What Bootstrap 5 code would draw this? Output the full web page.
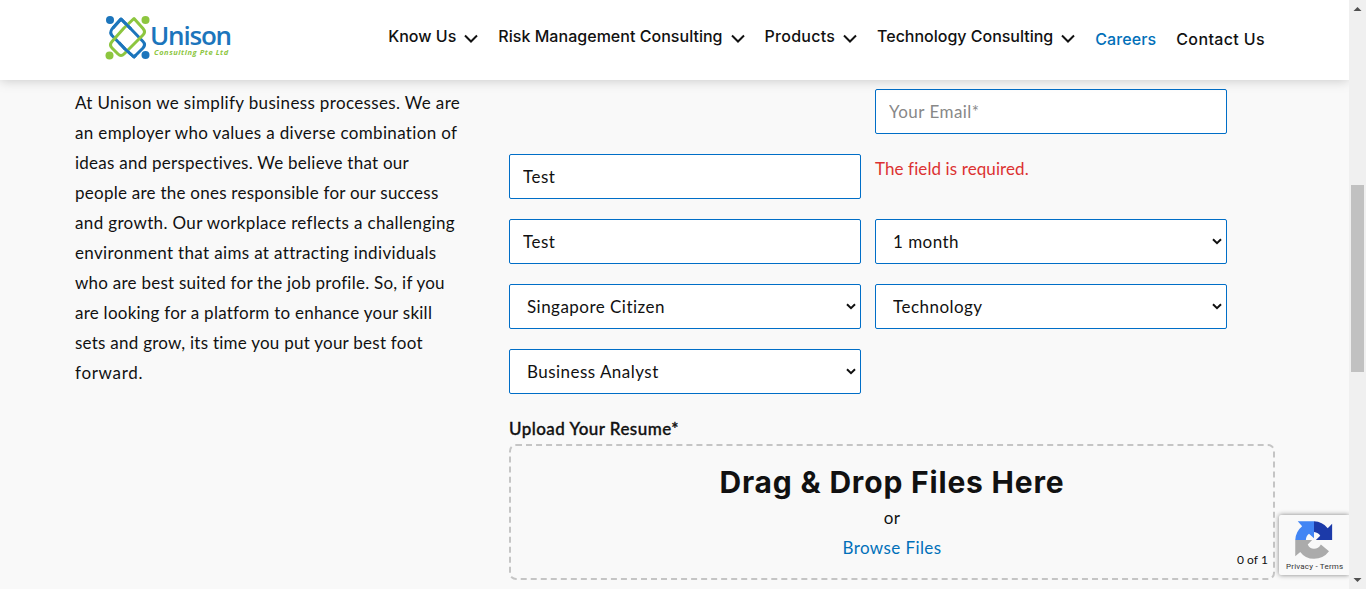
<!DOCTYPE html>
<html lang="en">
<head>
<meta charset="utf-8">
<meta name="viewport" content="width=device-width, initial-scale=1">
<title>Careers - Unison Consulting</title>
<link href="https://cdn.jsdelivr.net/npm/bootstrap@5.3.0/dist/css/bootstrap.min.css" rel="stylesheet">
<style>
html, body { height: 100%; overflow: hidden; }
body { background: #f9f9f9; color: #111; font-family: Lato, sans-serif; font-size: 17px; line-height: 30px; letter-spacing: .4px; }
.page-view { width: 1349px; height: 589px; overflow: hidden; }
.site-header { height: 80px; background: #fff; box-shadow: 0 0 12px rgba(0,0,0,.22); z-index: 5; padding-left: 105px; padding-right: 84px; }
.brand-logo { margin-top: 15px; width: 127px; height: 46px; text-decoration: none; letter-spacing: 0; }
.brand-logo svg { width: 46px; height: 46px; }
.brand-name { font-family: "Open Sans", sans-serif; font-size: 26px; font-weight: 600; line-height: 26px; letter-spacing: -1.2px; color: #1c75bc; margin: 7px 0 0 -1px; }
.brand-sub { font-family: "Open Sans", sans-serif; font-size: 7.5px; font-weight: 700; font-style: italic; line-height: 9px; letter-spacing: .55px; color: #8dc63f; padding-left: 3px; white-space: nowrap; }
.main-menu { font-family: Inter, sans-serif; font-weight: 500; font-size: 16px; line-height: 24px; letter-spacing: .03px; padding-top: 24px; gap: 20px; }
.main-menu a { color: #111; text-decoration: none; white-space: nowrap; height: 24px; }
.main-menu .plain { margin-top: 3px; }
.main-menu .current { color: #0170b9; letter-spacing: .1px; }
.main-menu .contact { letter-spacing: .37px; }
.main-menu .products { letter-spacing: .25px; }
.main-menu .tech { letter-spacing: -.01px; }
.main-menu svg { width: 14px; height: 9px; margin: 10px 0 0 8px; }
.careers-body { padding-left: 75px; padding-top: 8px; }
.intro-text { width: 434px; white-space: nowrap; letter-spacing: .35px; }
.intro-text .snug { letter-spacing: .25px; }
.intro-text .wide { letter-spacing: .7px; }
.form-area { width: 766px; }
.field-grid { display: grid; grid-template-columns: 352px 352px; column-gap: 14px; row-gap: 20px; grid-auto-rows: 45px; padding-top: 1px; }
.form-area .form-control, .form-area .form-select { height: 45px; border: 1px solid #006ec7; border-radius: 2px; background-color: #fff; color: #111; font: inherit; letter-spacing: .47px; padding: 0 13px; box-shadow: none; }
.form-area .form-control::placeholder { color: #888; }
.form-area .form-select { padding-left: 17px; background-image: url("data:image/svg+xml,%3Csvg xmlns='http://www.w3.org/2000/svg' viewBox='0 0 10 7'%3E%3Cpath d='M1 1.2 5 5.2 9 1.2' fill='none' stroke='%23111' stroke-width='2'/%3E%3C/svg%3E"); background-size: 10px 7px; background-position: right 4px center; }
.form-error { color: #dc3232; letter-spacing: .1px; }
.upload-label { font-weight: 500; margin-top: 20px; line-height: 30px; letter-spacing: .45px; -webkit-text-stroke: .35px #111; }
.drop-zone { height: 136px; border: 2px dashed #c5c5c5; border-radius: 7px; padding-top: 20px; }
.drop-title { font-family: Inter, sans-serif; font-size: 30px; font-weight: 700; line-height: 32px; margin: 0 0 5px; letter-spacing: .82px; }
.browse-link { color: #0170b9; text-decoration: none; }
.file-count { right: 5px; bottom: 10px; font-size: 12px; line-height: 16px; letter-spacing: .05px; }
.captcha-badge { left: 1279px; top: 515px; width: 70px; height: 60px; background: #f9f9f9; box-shadow: 0 0 5px #808080; border-radius: 2px 0 0 2px; z-index: 4; }
.captcha-badge svg { width: 40px; height: 40px; margin: 5px 0 0 15px; display: block; }
.captcha-links { font-family: Roboto, sans-serif; font-size: 8px; line-height: 10px; letter-spacing: .2px; padding: 2px 0 0 7px; white-space: nowrap; color: #333; }
.scroll-track { width: 17px; height: 589px; background: #f0f0f0; }
.scroll-thumb { width: 13px; height: 187px; margin: 0 2px; background: #c1c1c1; }
.scroll-track svg { width: 17px; display: block; }
</style>
</head>
<body>
<div class="d-flex">
  <div class="page-view position-relative">
    <header class="site-header d-flex justify-content-between position-relative">
      <a href="#" class="brand-logo d-flex" aria-label="Unison Consulting">
        <svg viewBox="0 0 46 46" class="flex-shrink-0">
          <g fill="none" stroke-width="3" stroke-linejoin="round" stroke-linecap="butt">
            <path d="M16 4 7 14Q4.500 17.500 7 20.500L20 34 29 42 38 33Q41 29.500 38 26.500L26 14Z" stroke="#1c75bc"/>
            <path d="M29 3.500 19 13 7 26.500Q4 30 7 33L13 39Q16 42 19 39L38 20Q41 17 38 13.500Z" stroke="#8dc63f"/>
            <path d="M26 14 16 4 8 13M31 40 29 42 20 34 14 27.500" stroke="#1c75bc"/>
          </g>
          <circle cx="5" cy="5" r="4" fill="#1c75bc"/><circle cx="40.500" cy="5" r="4" fill="#8dc63f"/>
          <circle cx="4.500" cy="40.500" r="4" fill="#8dc63f"/><circle cx="40.500" cy="40" r="4" fill="#1c75bc"/>
        </svg>
        <div>
          <div class="brand-name">Unison</div>
          <div class="brand-sub">Consulting Pte Ltd</div>
        </div>
      </a>
      <nav class="main-menu d-flex">
        <a href="#" class="d-flex"><span>Know Us</span><svg viewBox="0 0 14 9"><path d="M1 1.500 7 7.500 13 1.500" fill="none" stroke="#111" stroke-width="2"/></svg></a>
        <a href="#" class="d-flex"><span>Risk Management Consulting</span><svg viewBox="0 0 14 9"><path d="M1 1.500 7 7.500 13 1.500" fill="none" stroke="#111" stroke-width="2"/></svg></a>
        <a href="#" class="d-flex products"><span>Products</span><svg viewBox="0 0 14 9"><path d="M1 1.500 7 7.500 13 1.500" fill="none" stroke="#111" stroke-width="2"/></svg></a>
        <a href="#" class="d-flex tech"><span>Technology Consulting</span><svg viewBox="0 0 14 9"><path d="M1 1.500 7 7.500 13 1.500" fill="none" stroke="#111" stroke-width="2"/></svg></a>
        <a href="#" class="plain current">Careers</a>
        <a href="#" class="plain contact">Contact Us</a>
      </nav>
    </header>
    <main class="careers-body d-flex">
      <p class="intro-text mb-0">At Unison we simplify business processes. We are<br>an employer who values a diverse combination of<br><span class="snug">ideas and perspectives. We believe that our<br>people are the ones responsible for our success</span><br>and growth. Our workplace reflects a challenging<br>environment that aims at attracting individuals<br><span class="snug">who are best suited for the job profile. So, if you<br>are looking for a platform to enhance your skill<br>sets and grow, its time you put your best foot</span><br><span class="wide">forward.</span></p>
      <form class="form-area">
        <div class="field-grid">
          <span></span>
          <input type="email" class="form-control" placeholder="Your Email*">
          <input type="text" class="form-control" value="Test">
          <span class="form-error">The field is required.</span>
          <input type="text" class="form-control" value="Test">
          <select class="form-select"><option>1 month</option></select>
          <select class="form-select"><option>Singapore Citizen</option></select>
          <select class="form-select"><option>Technology</option></select>
          <select class="form-select"><option>Business Analyst</option></select>
        </div>
        <div class="upload-label">Upload Your Resume*</div>
        <div class="drop-zone position-relative text-center">
          <h3 class="drop-title">Drag &amp; Drop Files Here</h3>
          <div>or</div>
          <a href="#" class="browse-link">Browse Files</a>
          <span class="file-count position-absolute">0 of 1</span>
        </div>
      </form>
    </main>
    <aside class="captcha-badge position-absolute">
      <svg viewBox="0 0 64 64">
        <path d="M61 32V6l-7 7A30 30 0 0 0 32 2v17q7 1 10 6l-7 7z" fill="#1c3aa9"/>
        <path d="M32 2H6l7 8A30 30 0 0 0 2 32h17q0-6 5-10l8 7z" fill="#4285f4"/>
        <path d="M2 32v26l8-7q8 11 22 11 15 0 24-12L43 39q-4 7-11 7-7 0-10-7l7-7z" fill="#ababab"/>
      </svg>
      <div class="captcha-links">Privacy - Terms</div>
    </aside>
  </div>
  <div class="scroll-track d-flex flex-column">
    <svg height="185" viewBox="0 0 17 185"><path d="M4.500 11h8L8.500 7z" fill="#505050"/></svg>
    <div class="scroll-thumb"></div>
    <svg height="217" viewBox="0 0 17 217"><path d="M4.500 206h8l-4 4z" fill="#505050"/></svg>
  </div>
</div>
<script src="https://cdn.jsdelivr.net/npm/bootstrap@5.3.0/dist/js/bootstrap.bundle.min.js"></script>
</body>
</html>
